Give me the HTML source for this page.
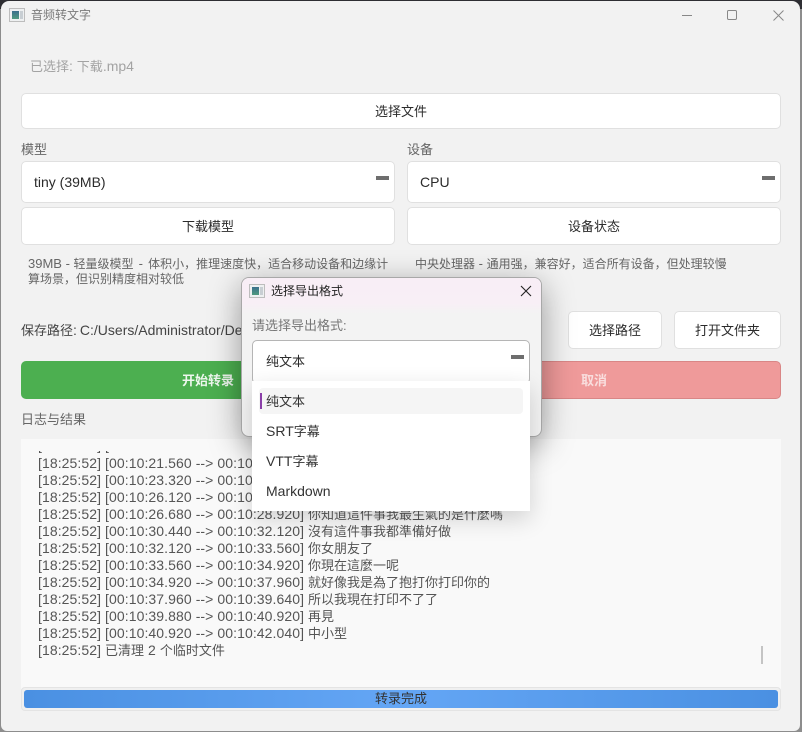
<!DOCTYPE html>
<html lang="zh"><head><meta charset="utf-8"><title>音频转文字</title>
<style>
*{box-sizing:border-box;margin:0;padding:0}
html,body{width:802px;height:732px;overflow:hidden;background:linear-gradient(#2e2e33 0,#2e2e33 9px,#8d8d8d 9px)}
body{position:relative;font-family:"Liberation Sans","Noto Sans CJK SC",sans-serif;font-size:14px;color:#333}
.a{position:absolute;white-space:nowrap}
.c{font-size:13px}
.win{position:absolute;left:1px;top:1px;width:799px;height:730px;background:#f2f2f2;border-radius:8px 8px 6px 6px}
.btn{position:absolute;background:#fff;border:1px solid #e0e0e0;border-radius:5px;display:flex;align-items:center;justify-content:center;color:#2b2b2b;font-size:13px;padding-bottom:2px}
.arrow{position:absolute;width:13px;height:4px;background:#6e6e6e}
.log{position:absolute;left:21px;top:439px;width:760px;height:250px;background:#f9f9f9;overflow:hidden}
.l{position:absolute;left:17px;white-space:nowrap;color:#555;font-size:14px;line-height:17px;height:17px;letter-spacing:.08px}
.l span{font-size:13px;letter-spacing:0}
.ico{position:absolute;width:16px;height:14px;border:1px solid #bdbdbd;background:#eef0f1}
.ico:before{content:"";position:absolute;left:2px;top:2px;width:7px;height:8px;background:linear-gradient(#3a6f8c,#4f9a7f)}
.ico:after{content:"";position:absolute;right:1px;top:2px;width:3px;height:8px;background:#c8ced3}
</style></head><body>
<div class="win"></div>

<div class="ico" style="left:9px;top:8px"></div>
<div class="a" style="left:31px;top:7px;font-size:12px;line-height:16px;color:#7a7a7a">音频转文字</div>
<svg class="a" style="left:680px;top:8px" width="110" height="14" viewBox="0 0 110 14" fill="none" stroke="#888" stroke-width="1">
<path d="M2 7.5H12"/><rect x="47.5" y="2.5" width="9" height="9" rx="1.2"/><path d="M93.5 2.5L103.5 12.5M103.5 2.5L93.5 12.5"/>
</svg>

<div class="a" style="left:30px;top:58px;font-size:14px;line-height:16px;color:#a3a3a3"><span class="c">已选择</span>: <span class="c">下载</span>.mp4</div>
<div class="btn" style="left:21px;top:93px;width:760px;height:36px">选择文件</div>

<div class="a" style="left:21px;top:142px;line-height:16px;font-size:13px;color:#666">模型</div>
<div class="a" style="left:407px;top:142px;line-height:16px;font-size:13px;color:#666">设备</div>

<div class="btn" style="left:21px;top:161px;width:374px;height:42px;justify-content:flex-start;padding:0 0 0 12px;font-size:14px">tiny (39MB)</div>
<div class="arrow" style="left:376px;top:176px"></div>
<div class="btn" style="left:407px;top:161px;width:374px;height:42px;justify-content:flex-start;padding:0 0 0 12px;font-size:14px">CPU</div>
<div class="arrow" style="left:762px;top:176px"></div>

<div class="btn" style="left:21px;top:207px;width:374px;height:38px">下载模型</div>
<div class="btn" style="left:407px;top:207px;width:374px;height:38px">设备状态</div>

<div class="a" style="left:28px;top:256px;font-size:12px;line-height:15px;color:#666"><span style="font-size:13px">39MB - </span>轻量级模型<span style="font-size:13px;padding:0 1.5px"> - </span>体积小，推理速度快，适合移动设备和边缘计<br>算场景，但识别精度相对较低</div>
<div class="a" style="left:415px;top:256px;font-size:12px;line-height:15px;color:#666">中央处理器<span style="font-size:13px"> - </span>通用强，兼容好，适合所有设备，但处理较慢</div>

<div class="a" style="left:21px;top:322px;line-height:17px;color:#444;font-size:14px"><span class="c">保存路径</span>:<span style="margin-left:3px">C:/Users/Administrator/Desktop</span></div>
<div class="btn" style="left:568px;top:311px;width:94px;height:38px">选择路径</div>
<div class="btn" style="left:674px;top:311px;width:107px;height:38px">打开文件夹</div>

<div class="btn" style="left:21px;top:361px;width:374px;height:38px;background:#4caf50;border:none;color:#eef7ee;font-weight:bold">开始转录</div>
<div class="btn" style="left:407px;top:361px;width:374px;height:38px;background:#ef9a9a;border:1px solid #d98686;color:#f9dede;font-weight:bold">取消</div>

<div class="a" style="left:21px;top:412px;line-height:16px;font-size:13px;color:#666">日志与结果</div>

<div class="log">
<div class="l" style="top:-2px">[18:25:52] [00:10:19.000 --&gt; 00:10:21.560]</div>
<div class="a" style="left:0;top:0;width:760px;height:12px;background:#f9f9f9"></div>
<div class="l" style="top:16px">[18:25:52] [00:10:21.560 --&gt; 00:10:23.320]</div>
<div class="l" style="top:33px">[18:25:52] [00:10:23.320 --&gt; 00:10:26.120]</div>
<div class="l" style="top:50px">[18:25:52] [00:10:26.120 --&gt; 00:10:26.680]</div>
<div class="l" style="top:67px">[18:25:52] [00:10:26.680 --&gt; 00:10:28.920] <span>你知道這件事我最生氣的是什麼嗎</span></div>
<div class="l" style="top:84px">[18:25:52] [00:10:30.440 --&gt; 00:10:32.120] <span>沒有這件事我都準備好做</span></div>
<div class="l" style="top:101px">[18:25:52] [00:10:32.120 --&gt; 00:10:33.560] <span>你女朋友了</span></div>
<div class="l" style="top:118px">[18:25:52] [00:10:33.560 --&gt; 00:10:34.920] <span>你現在這麼一呢</span></div>
<div class="l" style="top:135px">[18:25:52] [00:10:34.920 --&gt; 00:10:37.960] <span>就好像我是為了抱打你打印你的</span></div>
<div class="l" style="top:152px">[18:25:52] [00:10:37.960 --&gt; 00:10:39.640] <span>所以我現在打印不了了</span></div>
<div class="l" style="top:169px">[18:25:52] [00:10:39.880 --&gt; 00:10:40.920] <span>再見</span></div>
<div class="l" style="top:186px">[18:25:52] [00:10:40.920 --&gt; 00:10:42.040] <span>中小型</span></div>
<div class="l" style="top:203px">[18:25:52] <span>已清理</span> 2 <span>个临时文件</span></div>
<div class="a" style="left:740px;top:207px;width:2px;height:18px;background:#c4c4c4"></div>
</div>

<div class="a" style="left:21px;top:687px;width:760px;height:24px;background:#f0f0f0;border:1px solid #e4e4e4;border-radius:4px"></div>
<div class="a" style="left:24px;top:690px;width:754px;height:18px;border-radius:3px;background:linear-gradient(90deg,#4a90e2 0,#64a6f5 50%,#4a90e2 100%);text-align:center;line-height:18px;font-size:13px;color:#333">转录完成</div>

<!-- dialog -->
<div class="a" style="left:241px;top:277px;width:301px;height:160px;background:#f3f3f3;border:1px solid #a8a8a8;border-radius:8px;box-shadow:0 8px 32px rgba(0,0,0,.38)">
  <div class="a" style="left:0;top:0;width:100%;height:36px;border-radius:7px 7px 0 0;background:linear-gradient(#f8eef6 0,#f8eff6 70%,#f3f3f3 100%)"></div>
</div>
<div class="ico" style="left:249px;top:284px"></div>
<div class="a" style="left:271px;top:283px;font-size:12px;line-height:16px;color:#222">选择导出格式</div>
<svg class="a" style="left:520px;top:285px" width="12" height="12" viewBox="0 0 12 12" fill="none" stroke="#222" stroke-width="1.1"><path d="M1 1L11 11M11 1L1 11"/></svg>
<div class="a" style="left:252px;top:318px;font-size:13px;line-height:16px;color:#777">请选择导出格式:</div>
<div class="btn" style="left:252px;top:340px;width:278px;height:44px;border-color:#b5b5b5;justify-content:flex-start;padding:0 0 4px 13px">纯文本</div>
<div class="arrow" style="left:511px;top:355px"></div>

<!-- dropdown -->
<div class="a" style="left:252px;top:381px;width:278px;height:130px;background:#fff;box-shadow:0 8px 22px rgba(0,0,0,.16)"></div>
<div class="a" style="left:259px;top:388px;width:264px;height:26px;background:#f5f5f5;border-radius:4px"></div>
<div class="a" style="left:260px;top:393px;width:2px;height:16px;background:#8a3ea8"></div>
<div class="a" style="left:266px;top:393px;line-height:17px;font-size:13px;color:#333">纯文本</div>
<div class="a" style="left:266px;top:423px;line-height:17px;color:#333">SRT<span class="c">字幕</span></div>
<div class="a" style="left:266px;top:453px;line-height:17px;color:#333">VTT<span class="c">字幕</span></div>
<div class="a" style="left:266px;top:483px;line-height:17px;color:#333">Markdown</div>
</body></html>
